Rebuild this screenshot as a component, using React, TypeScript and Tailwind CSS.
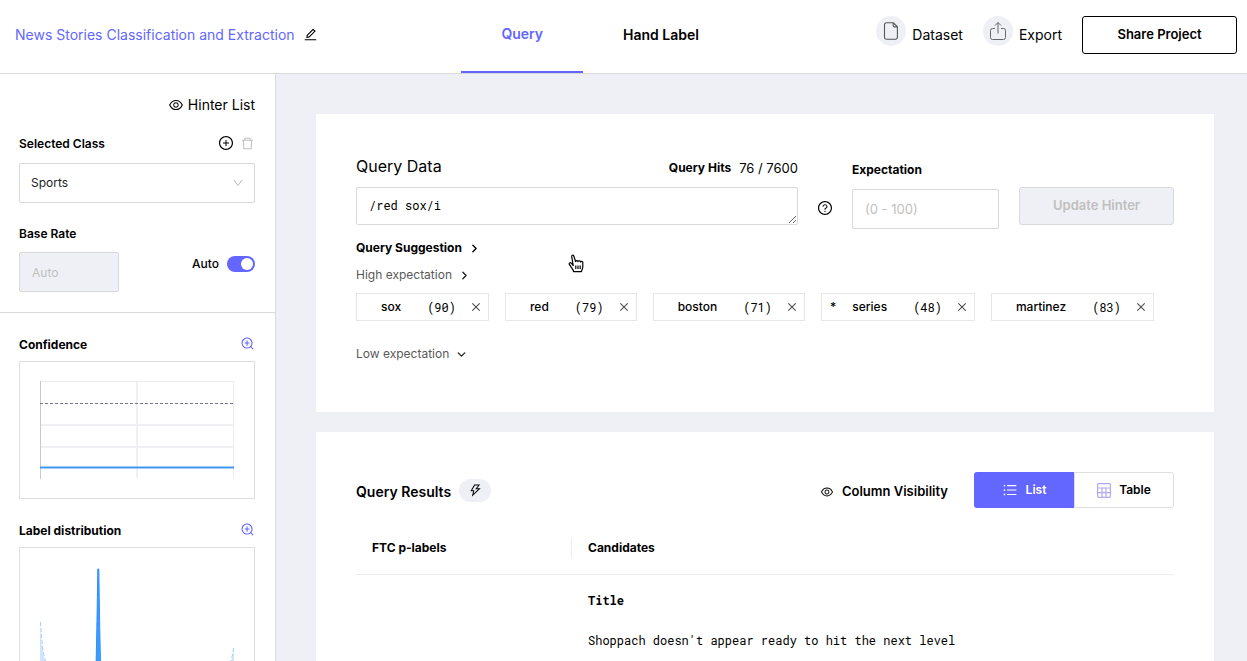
import {
  AiOutlineClose,
  AiOutlineDelete,
  AiOutlineDown,
  AiOutlineEdit,
  AiOutlineEye,
  AiOutlinePlusCircle,
  AiOutlineQuestionCircle,
  AiOutlineThunderbolt,
  AiOutlineUnorderedList,
  AiOutlineZoomIn,
} from "react-icons/ai";
import { ChevronDown, ChevronRight } from "lucide-react";

type Suggestion = { name: string; score: number; starred?: boolean };

const suggestions: Suggestion[] = [
  { name: "sox", score: 90 },
  { name: "red", score: 79 },
  { name: "boston", score: 71 },
  { name: "series", score: 48, starred: true },
  { name: "martinez", score: 83 },
];

const DatasetIcon = () => (
  <svg width="16" height="18" viewBox="0 0 16 18" fill="none" stroke="#555" strokeWidth="1.1">
    <path d="M3.4 .8h7l4 4v10.500a1.900 1.900 0 0 1-1.900 1.900H3.400a1.900 1.900 0 0 1-1.900-1.900V2.700A1.900 1.900 0 0 1 3.400.8Z" />
    <path d="M10.200 1v2.500a1.400 1.400 0 0 0 1.400 1.400h2.700" />
  </svg>
);

const ExportIcon = () => (
  <svg width="18" height="20" viewBox="0 0 18 20" fill="none" stroke="#666">
    <path d="M6 7.500H3.500a2 2 0 0 0-2 2v7a2 2 0 0 0 2 2h11a2 2 0 0 0 2-2v-7a2 2 0 0 0-2-2H12" />
    <path d="M9 12.500v-11M6 4.500l3-3 3 3" />
  </svg>
);

const TableIcon = () => (
  <svg width="14" height="15" viewBox="0 0 14 15" fill="none" stroke="#b3a9f5" strokeWidth="1.2">
    <rect x="0.6" y="0.6" width="12.8" height="13.8" rx="1" />
    <path d="M1 5h12M1 9.600h12M5 5v9M9 5v9" />
  </svg>
);

const HandCursor = () => (
  <svg width="17" height="19" viewBox="0 0 17 19" fill="#fff" stroke="#000" strokeWidth="1.2" strokeLinejoin="round">
    <path d="M5.200 11.500 3.200 9.200C2.200 8.200.7 9 1.300 10.400l2.900 4.300c.5.800 1.300 1.200 1.300 2.900h8c0-1.500 1.300-2.600 1.300-4.600V8.600c0-1.500-1.900-1.700-2.200-.5 0-1.500-2.200-1.800-2.500-.4-.2-1.400-2.200-1.500-2.500-.2L5.800 2C5.300.600 3.300 1.100 3.700 2.700Z" />
    <path d="M7.800 11.500v3.500M10 11.500v3.500M12.200 11.500v3.500" />
  </svg>
);

const ConfidenceChart = () => (
  <svg className="block w-full" viewBox="0 0 234 136" fill="none">
    <path d="M20 63h194M20 85h194M117 19v97" stroke="#f0f0f4" strokeWidth="2" />
    <path d="M20.5 19.5h193V116" stroke="#ebecf0" />
    <path d="M20.5 19v98" stroke="#c8c9ce" />
    <path d="M20 41.5h194" stroke="#74748c" strokeDasharray="3 2" />
    <path d="M20 105.5h194" stroke="#3f97ef" strokeWidth="2" />
  </svg>
);

const DistributionChart = () => (
  <svg className="block w-full" viewBox="0 0 234 136" fill="none">
    <path d="M20 74c1 16 2 32 5.500 40 2 3 3 4 5 5v17H20Z" fill="#cfe4fd" />
    <path d="M20.500 74c1 16 2 32 5.500 40 2 3 3 4 5 5" stroke="#a9cdf8" strokeDasharray="4 2" />
    <path d="M214 100c-1 8-2 12-4 15-2 3-3 4-5 5v16h9Z" fill="#cfe4fd" />
    <path d="M213.500 100c-1 8-2 12-4 15-2 3-3 4-5 5" stroke="#a9cdf8" strokeDasharray="4 2" />
    <path d="M75.500 136c1-30 1.800-80 2.300-115h1c.5 35 1.300 85 2.300 115Z" fill="#3b9cff" stroke="#2b8ffb" />
  </svg>
);

const Header = () => (
  <header className="flex h-[74px] shrink-0 border-b border-[#d9d9d9] bg-white">
    <div className="flex w-[37%] items-center gap-2 pb-1 pl-[15px]">
      <h1 className="text-sm leading-5 whitespace-nowrap text-[#6366ff]">
        News Stories Classification and Extraction
      </h1>
      <button aria-label="Rename project">
        <AiOutlineEdit size={15} />
      </button>
    </div>
    <nav className="flex text-sm font-semibold">
      <a href="#query" className="flex items-center border-b-2 border-[#6366ff] px-10 pb-[3px] text-[#6366ff]">
        Query
      </a>
      <a href="#hand-label" className="flex items-center px-10 pb-[3px] whitespace-nowrap">
        Hand Label
      </a>
    </nav>
    <div className="ml-auto flex items-center gap-5 pr-[10px] pb-[3px]">
      <button className="flex items-center gap-[6px] text-sm">
        <span className="mb-2 flex size-[30px] items-center justify-center rounded-full bg-[#eff0f5]">
          <DatasetIcon />
        </span>
        Dataset
      </button>
      <button className="flex items-center gap-[6px] text-sm">
        <span className="mb-2 flex size-[30px] items-center justify-center rounded-full bg-[#eff0f5]">
          <ExportIcon />
        </span>
        Export
      </button>
      <button className="h-[38px] w-[155px] rounded-[3px] border border-black text-[13px] font-semibold">
        Share Project
      </button>
    </div>
  </header>
);

const ChartHeading = ({ title }: { title: string }) => (
  <div className="mt-[22px] mb-[6px] flex items-start justify-between">
    <h2 className="text-xs leading-5 font-bold">{title}</h2>
    <button aria-label={`Enlarge ${title}`} className="pt-px text-[#6366ff]">
      <AiOutlineZoomIn size={15} />
    </button>
  </div>
);

const Sidebar = () => (
  <aside className="w-[276px] shrink-0 overflow-y-auto border-r border-[#d9d9d9] bg-white [scrollbar-width:none]">
    <section className="border-b border-[#d9d9d9] pt-5 pr-5 pb-5 pl-[19px]">
      <button className="ml-auto flex items-center gap-1 text-sm leading-[22px]">
        <AiOutlineEye size={16} />
        Hinter List
      </button>

      <div className="mt-[18px] mb-[9px] flex items-start justify-between">
        <label htmlFor="class" className="text-xs leading-5 font-semibold">
          Selected Class
        </label>
        <div className="flex gap-[6px] pt-px">
          <button aria-label="Add class">
            <AiOutlinePlusCircle size={16} />
          </button>
          <button aria-label="Delete class" className="text-[#bfbfbf]">
            <AiOutlineDelete size={15} />
          </button>
        </div>
      </div>
      <div className="relative">
        <select
          id="class"
          className="block h-10 w-full appearance-none rounded-xs border border-[#d9d9d9] bg-white px-[11px] text-xs text-[#222]"
        >
          <option>Sports</option>
        </select>
        <AiOutlineDown size={12} className="pointer-events-none absolute top-[14px] right-[11px] text-[#bfbfbf]" />
      </div>

      <label htmlFor="base-rate" className="mt-[21px] mb-2 block text-xs leading-5 font-semibold">
        Base Rate
      </label>
      <div className="flex items-start justify-between">
        <input
          id="base-rate"
          disabled
          placeholder="Auto"
          className="h-10 w-[100px] rounded-xs border border-[#d9d9d9] bg-[#eff0f5] px-3 text-xs placeholder:text-[#bfbfbf]"
        />
        <label className="flex h-6 cursor-pointer items-center gap-2 text-xs font-medium">
          Auto
          <input type="checkbox" role="switch" defaultChecked className="peer sr-only" />
          <span className="flex h-4 w-7 items-center rounded-full bg-[#bfbfbf] px-[2px] peer-checked:justify-end peer-checked:bg-[#6366ff]">
            <span className="size-3 rounded-full bg-white" />
          </span>
        </label>
      </div>
    </section>

    <section className="pr-5 pl-[19px]">
      <ChartHeading title="Confidence" />
      <div className="border border-[#dedede]">
        <ConfidenceChart />
      </div>
      <ChartHeading title="Label distribution" />
      <div className="border border-[#dedede]">
        <DistributionChart />
      </div>
    </section>
  </aside>
);

const SuggestionTag = ({ name, score, starred }: Suggestion) => (
  <div className="flex h-7 items-center border border-[#e6e6e6] text-xs">
    <span className="px-2 font-medium">{starred ? "*" : ""}</span>
    <button className="px-2 font-medium">{name}</button>
    <span className="pl-[18px] font-['Roboto_Mono','DejaVu_Sans_Mono',monospace]">({score})</span>
    <button aria-label={`Remove ${name}`} className="pr-[6px] pl-[14px] text-[#444]">
      <AiOutlineClose size={12} />
    </button>
  </div>
);

const QueryCard = () => (
  <section className="relative bg-white px-10 pt-10 pb-12">
    <div className="flex gap-5">
      <div className="flex-1">
        <div className="mb-[9px] flex items-end justify-between">
          <label htmlFor="query" className="text-base leading-6">
            Query Data
          </label>
          <p className="flex gap-2 text-xs leading-5">
            <span className="font-bold">Query Hits</span>
            <span className="text-[13px]">76 / 7600</span>
          </p>
        </div>
        <textarea
          id="query"
          rows={1}
          defaultValue="/red sox/i"
          className="block h-[38px] w-full resize-y rounded-xs border border-[#d9d9d9] px-3 py-[7px] font-['Roboto_Mono','DejaVu_Sans_Mono',monospace] text-xs leading-5"
        />
      </div>
      <button aria-label="Query help" className="flex w-[14px] justify-center self-start pt-[46px]">
        <AiOutlineQuestionCircle size={16} className="shrink-0" />
      </button>
      <div className="w-[147px] pt-[6px]">
        <label htmlFor="expectation" className="mb-[9px] block text-xs leading-5 font-bold">
          Expectation
        </label>
        <input
          id="expectation"
          placeholder="(0 - 100)"
          className="block h-10 w-full rounded-xs border border-[#d9d9d9] px-3 text-[13px] placeholder:text-[#bfbfbf]"
        />
      </div>
      <button
        disabled
        className="mt-[33px] h-[38px] w-[155px] rounded-[3px] border border-[#d9d9d9] bg-[#eff0f5] text-[13px] font-semibold text-[#bfbfbf]"
      >
        Update Hinter
      </button>
    </div>

    <button className="mt-[9px] flex items-center gap-[6px] text-xs leading-5 font-bold">
      Query Suggestion
      <ChevronRight size={13} strokeWidth={2.5} />
    </button>
    <button className="mt-[7px] flex items-center gap-[6px] text-xs leading-5 text-[#595959]">
      High expectation
      <ChevronRight size={13} strokeWidth={2.5} className="text-[#222]" />
    </button>
    <div className="mt-2 flex flex-wrap gap-4">
      {suggestions.map((item) => (
        <SuggestionTag key={item.name} {...item} />
      ))}
    </div>
    <button className="mt-[23px] flex items-center gap-[6px] text-xs leading-5 text-[#595959]">
      Low expectation
      <ChevronDown size={13} strokeWidth={2.5} className="text-[#222]" />
    </button>

    <div className="pointer-events-none absolute top-[140px] left-[252px]">
      <HandCursor />
    </div>
  </section>
);

const ResultsCard = () => (
  <section className="flex-1 bg-white p-10">
    <div className="flex h-9 items-center">
      <h2 className="pt-1 text-sm font-semibold">Query Results</h2>
      <button aria-label="Run query" className="ml-2 flex h-[23px] w-8 items-center justify-center rounded-full bg-[#eff0f5]">
        <AiOutlineThunderbolt size={15} />
      </button>
      <button className="mr-[26px] ml-auto flex items-center gap-2 pt-1 text-[13px] font-semibold">
        <AiOutlineEye size={14} />
        Column Visibility
      </button>
      <div className="flex text-xs font-semibold">
        <button className="flex h-9 w-[100px] items-center justify-center gap-2 rounded-l-[3px] bg-[#6366ff] text-white">
          <AiOutlineUnorderedList size={16} />
          List
        </button>
        <button className="flex h-9 w-[100px] items-center justify-center gap-2 rounded-r-[3px] border border-[#dedede]">
          <TableIcon />
          Table
        </button>
      </div>
    </div>

    <table className="mt-[15px] w-full text-left text-xs leading-5">
      <thead>
        <tr className="h-[51px] border-b border-[#ededed]">
          <th className="w-[216px] pl-4 font-bold">
            <div className="border-r border-[#ededed]">FTC p-labels</div>
          </th>
          <th className="px-4 font-bold">Candidates</th>
        </tr>
      </thead>
      <tbody className="font-['Roboto_Mono','DejaVu_Sans_Mono',monospace]">
        <tr>
          <td />
          <td className="px-4 py-[15px]">
            <h3 className="font-bold">Title</h3>
            <p className="mt-5">Shoppach doesn't appear ready to hit the next level</p>
          </td>
        </tr>
      </tbody>
    </table>
  </section>
);

export const App = () => (
  <div className="flex h-screen flex-col bg-[#eff0f5] font-[Inter,sans-serif] text-black">
    <Header />
    <div className="flex min-h-0 flex-1">
      <Sidebar />
      <main className="flex flex-1 flex-col gap-5 overflow-y-auto pt-10 pr-[33px] pl-10 [scrollbar-width:none]">
        <QueryCard />
        <ResultsCard />
      </main>
    </div>
  </div>
);

export default App;
